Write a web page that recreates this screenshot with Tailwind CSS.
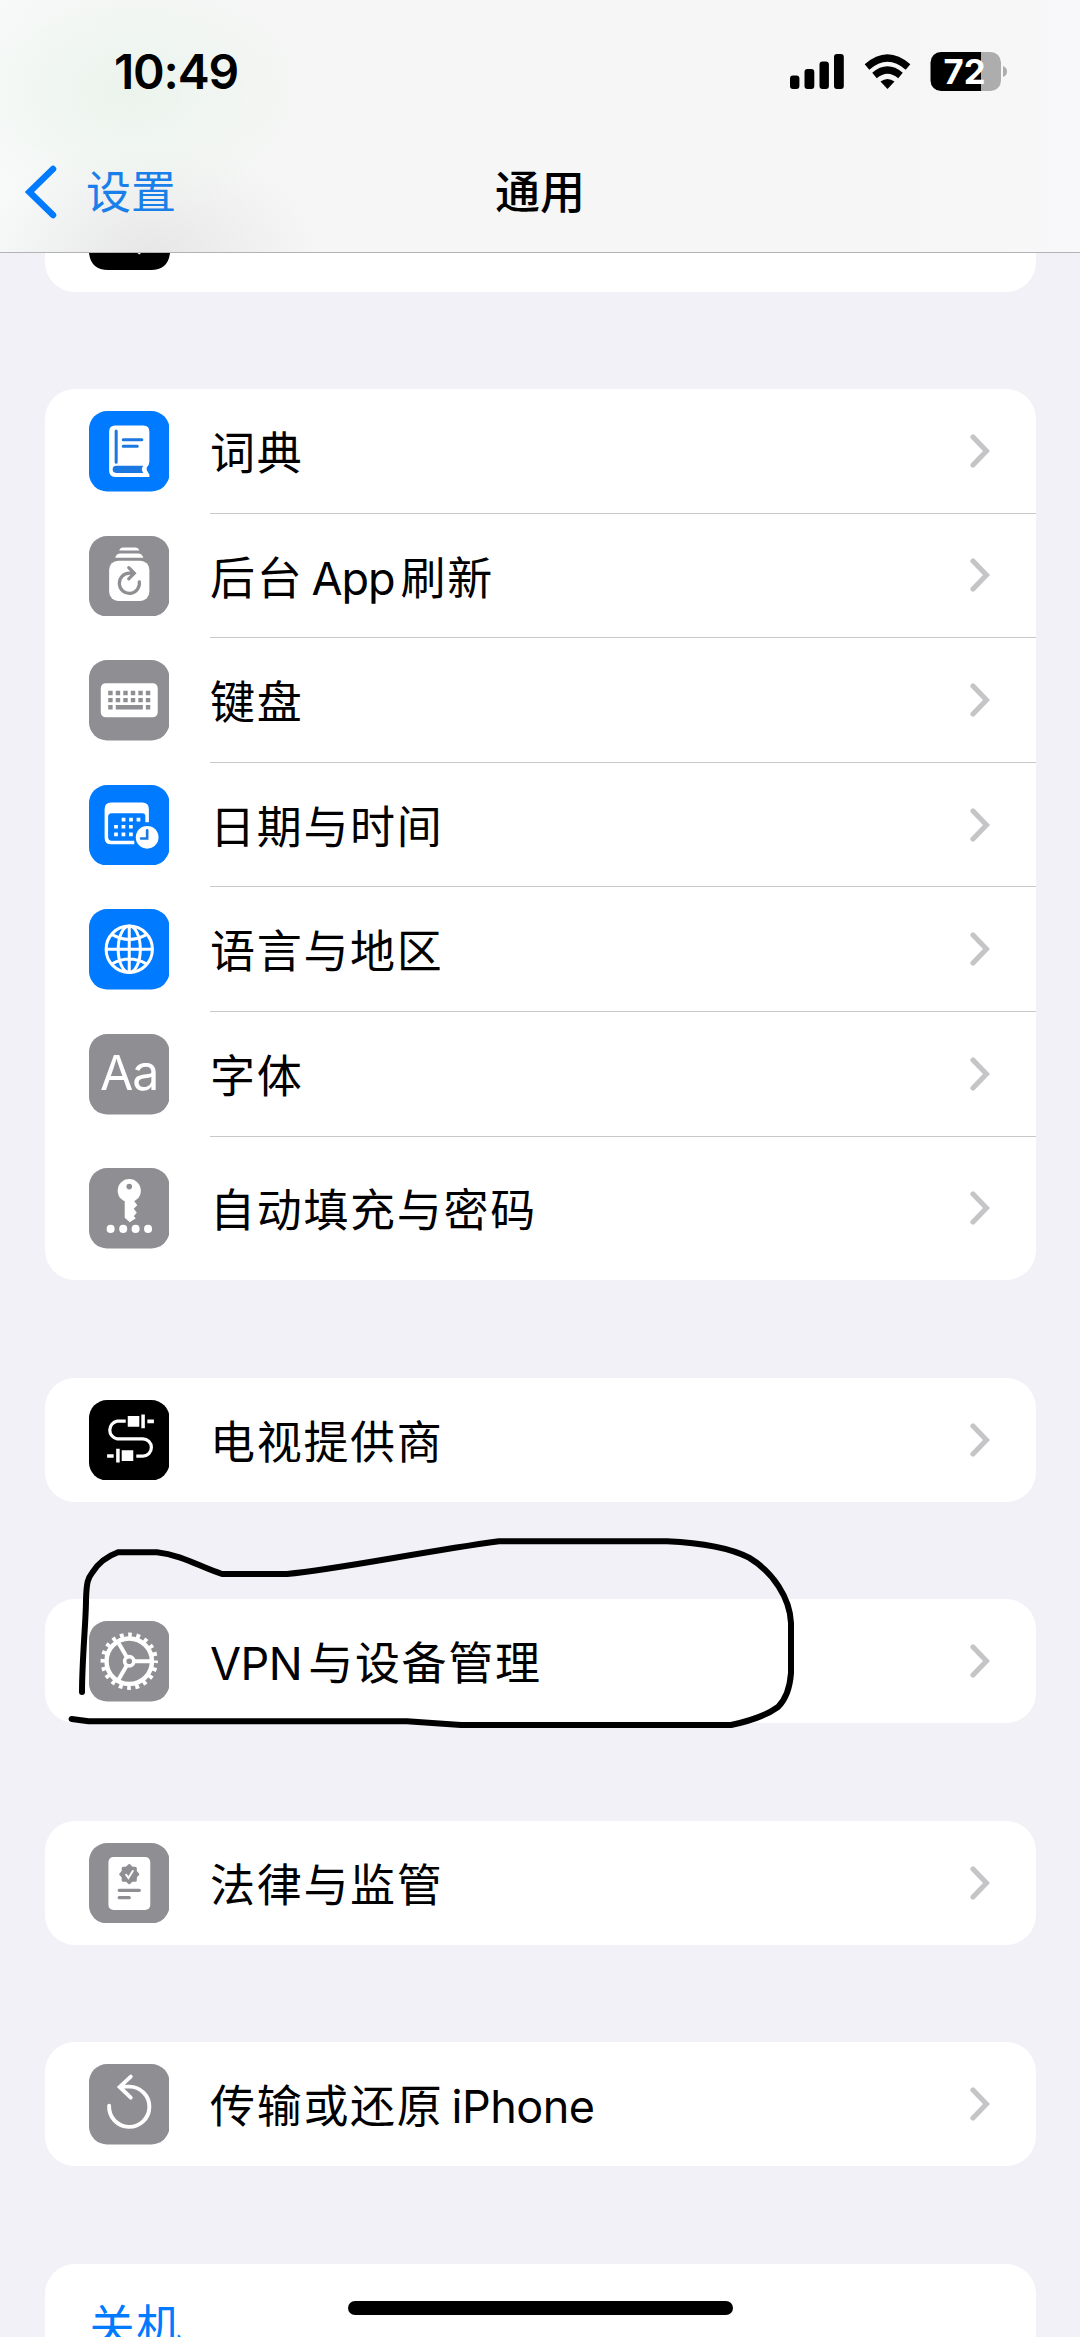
<!DOCTYPE html>
<html lang="zh-CN">
<head>
<meta charset="utf-8">
<title>通用</title>
<script src="https://cdn.jsdelivr.net/npm/@tailwindcss/browser@4"></script>
</head>
<body class="relative flex h-[2337px] w-[1080px] flex-col overflow-hidden bg-[#f2f1f7] font-['Inter','Noto_Sans_CJK_SC',sans-serif] text-black">

<svg class="hidden">
  <symbol id="chev" viewBox="0 0 20 34"><path d="M3 3L16.500 17L3 31" fill="none" stroke="#c5c5c7" stroke-width="5.200" stroke-linecap="round" stroke-linejoin="miter"/></symbol>
</svg>

<header class="relative flex h-[253px] shrink-0 flex-col border-b border-[#b3b3b6] bg-[radial-gradient(ellipse_190px_130px_at_130px_90px,#ebf4ec,transparent),radial-gradient(ellipse_170px_120px_at_150px_260px,#e6e6e6,transparent),linear-gradient(90deg,#f8fafa,#f6f6f6_25%,#f6f6f6_85%,#f8f8fa)]">
  <div class="flex h-[144px] shrink-0 items-center justify-between pl-[114px] pr-[73px]">
    <div class="text-[48px] leading-none font-semibold tracking-[-1.200px]">10:49</div>
    <svg class="h-[60px] w-[220px]" viewBox="0 0 220 60">
      <g>
        <rect x="3" y="33.500" width="9.400" height="13.500" rx="3"/><rect x="17.500" y="27" width="9.800" height="20" rx="3"/><rect x="32.500" y="19.500" width="9.400" height="27.500" rx="3"/><rect x="47" y="12" width="9.800" height="35" rx="3"/>
      </g>
      <g fill="none" stroke="#000" stroke-width="7">
        <path d="M80 25Q100.500 7 121 25"/><path d="M87.500 33.500Q100.500 22.500 113.500 33.500"/>
      </g>
      <path d="M93.500 39.500Q100.500 34.500 107.500 39.500L100.500 47Z"/>
      <path d="M154 10h40v39h-40a10.500 10.500 0 0 1-10.500-10.500v-18A10.500 10.500 0 0 1 154 10z"/>
      <path d="M194 10h9.500a10.500 10.500 0 0 1 10.500 10.500v18a10.500 10.500 0 0 1-10.500 10.500H194z" fill="#adadad"/>
      <path d="M216 24q4 1.500 4 5.500t-4 5.500z" fill="#adadad"/>
      <text x="156.500" y="42" font-size="34" font-weight="700" textLength="42" lengthAdjust="spacingAndGlyphs" fill="#fff">72</text>
    </svg>
  </div>
  <div class="relative flex h-[96px] items-center justify-center text-[45px] leading-none">
    <div class="absolute left-[25px] top-0 flex h-full items-center gap-[29px] text-[#1a7fe8]">
      <svg class="h-[56px] w-[32px]" viewBox="0 0 32 56"><path d="M28 5L4.500 28L28 51" fill="none" stroke="#007aff" stroke-width="6.500" stroke-linecap="round"/></svg>
      <span>设置</span>
    </div>
    <h1 class="font-medium">通用</h1>
  </div>
</header>

<main class="flex flex-col px-[44.500px] text-[45px]">
  <section class="h-[39px] rounded-b-[30px] bg-white pl-[44px]">
    <svg class="h-[17px] w-[81px]" viewBox="0 0 81 17"><path d="M0 0H81Q79 17 62 17H19Q2 17 0 0z"/><path d="M48.500 0h3.500l-1.800 1.500z" fill="#fff"/></svg>
  </section>

  <section class="mt-[97px] flex flex-col rounded-[30px] bg-white">
    <div class="flex h-[124.600px] items-center pl-[44px]">
      <svg class="h-[80.500px] w-[80.500px] shrink-0" viewBox="0 0 80 80">
        <rect width="80" height="80" rx="18" fill="#007aff"/>
        <path d="M26 14.500h28q6 0 6 6v30q0 3-2.500 5.500q-1 3 2.500 7v2.500H26q-6 0-6-6v-39q0-6 6-6z" fill="#fff"/>
        <path d="M27 20v31M34 28.500h18.500M34 35h14" stroke="#1a78e0" stroke-width="3" stroke-linecap="round"/>
        <path d="M27 54.500h27q-3 3.500 0 7H27q-3.500 0-3.500-3.500t3.500-3.500z" fill="#1a78e0"/>
      </svg>
      <div class="ml-[41px] flex h-full flex-1 items-center border-b border-[#c8c8cb] pr-[46px]"><span class="flex-1 pt-[6px] tracking-[1.700px]">词典</span><svg class="h-[34px] w-[20px]"><use href="#chev"/></svg></div>
    </div>
    <div class="flex h-[124.600px] items-center pl-[44px]">
      <svg class="h-[80.500px] w-[80.500px] shrink-0" viewBox="0 0 80 80">
        <rect width="80" height="80" rx="18" fill="#8e8e93"/>
        <path d="M30 14.500q1-3 4-3h12q3 0 4 3zM26 21.500q1.500-4 5-4h18q3.500 0 5 4z" fill="#fff"/>
        <rect x="20" y="24.500" width="40" height="40" rx="9" fill="#fff"/>
        <path d="M50 45.500A10 10 0 1 1 40 37H44.500M39.500 31.500L45 37L39.500 42.500" fill="none" stroke="#8e8e93" stroke-width="3.200" stroke-linecap="round"/>
      </svg>
      <div class="ml-[41px] flex h-full flex-1 items-center border-b border-[#c8c8cb] pr-[46px]"><span class="flex-1 pt-[6px] tracking-[1.700px]">后台<span class="ml-[8px] mr-[6px] tracking-[-1px]">App</span>刷新</span><svg class="h-[34px] w-[20px]"><use href="#chev"/></svg></div>
    </div>
    <div class="flex h-[124.600px] items-center pl-[44px]">
      <svg class="h-[80.500px] w-[80.500px] shrink-0" viewBox="0 0 80 80">
        <rect width="80" height="80" rx="18" fill="#8e8e93"/>
        <rect x="11.700" y="23" width="56.600" height="34" rx="5" fill="#fff"/>
        <path d="M19.100 32.800H61M19.100 39.900H61" stroke="#8e8e93" stroke-width="4.400" stroke-dasharray="4.400 3.080"/>
        <path d="M19.100 47h4.400M26.600 47h26.900M56.500 47H60.900" stroke="#8e8e93" stroke-width="4.400"/>
      </svg>
      <div class="ml-[41px] flex h-full flex-1 items-center border-b border-[#c8c8cb] pr-[46px]"><span class="flex-1 pt-[6px] tracking-[1.700px]">键盘</span><svg class="h-[34px] w-[20px]"><use href="#chev"/></svg></div>
    </div>
    <div class="flex h-[124.600px] items-center pl-[44px]">
      <svg class="h-[80.500px] w-[80.500px] shrink-0" viewBox="0 0 80 80">
        <rect width="80" height="80" rx="18" fill="#007aff"/>
        <path d="M22 17.500h31q6.500 0 6.500 6.500v13h-3.500v-6q0-3-3-3H22.500q-3.500 0-3.500 3.500v20q0 4 3.500 4H45v3.500H22q-6.500 0-6.500-6.500V24q0-6.500 6.500-6.500z" fill="#fff"/>
        <path d="M32.500 34.500h18.500M25 41.500h18.500M25 49h18.500" stroke="#fff" stroke-width="3.700" stroke-dasharray="3.700 3.700"/>
        <circle cx="57.800" cy="52" r="11.300" fill="#fff"/><path d="M57.800 45v8.200h-6" fill="none" stroke="#1a78e0" stroke-width="2.600" stroke-linecap="round"/>
      </svg>
      <div class="ml-[41px] flex h-full flex-1 items-center border-b border-[#c8c8cb] pr-[46px]"><span class="flex-1 pt-[6px] tracking-[1.700px]">日期与时间</span><svg class="h-[34px] w-[20px]"><use href="#chev"/></svg></div>
    </div>
    <div class="flex h-[124.600px] items-center pl-[44px]">
      <svg class="h-[80.500px] w-[80.500px] shrink-0" viewBox="0 0 80 80">
        <rect width="80" height="80" rx="18" fill="#007aff"/>
        <g fill="none" stroke="#fff" stroke-width="3"><circle cx="40" cy="40" r="23"/><ellipse cx="40" cy="40" rx="11" ry="23"/><path d="M40 17v46M17 40h46M23 25.500q17 9.500 34 0M23 54.500q17-9.500 34 0"/></g>
      </svg>
      <div class="ml-[41px] flex h-full flex-1 items-center border-b border-[#c8c8cb] pr-[46px]"><span class="flex-1 pt-[6px] tracking-[1.700px]">语言与地区</span><svg class="h-[34px] w-[20px]"><use href="#chev"/></svg></div>
    </div>
    <div class="flex h-[124.600px] items-center pl-[44px]">
      <svg class="h-[80.500px] w-[80.500px] shrink-0" viewBox="0 0 80 80">
        <rect width="80" height="80" rx="18" fill="#8e8e93"/>
        <text x="11" y="56" font-size="48" textLength="59" fill="#fff">Aa</text>
      </svg>
      <div class="ml-[41px] flex h-full flex-1 items-center border-b border-[#c8c8cb] pr-[46px]"><span class="flex-1 pt-[6px] tracking-[1.700px]">字体</span><svg class="h-[34px] w-[20px]"><use href="#chev"/></svg></div>
    </div>
    <div class="flex h-[143.400px] items-center pl-[44px]">
      <svg class="h-[80.500px] w-[80.500px] shrink-0" viewBox="0 0 80 80">
        <rect width="80" height="80" rx="18" fill="#8e8e93"/>
        <circle cx="40" cy="22.500" r="11.500" fill="#fff"/><circle cx="40" cy="18.500" r="2.800" fill="#8e8e93"/>
        <path d="M35.500 30h9.500v3l3 4l-3.500 3.500l3 4l-3 3.500l2 2l-6 4l-5-4.500z" fill="#fff"/>
        <g fill="#fff"><circle cx="21.500" cy="60.500" r="4"/><circle cx="34" cy="60.500" r="4"/><circle cx="46.300" cy="60.500" r="4"/><circle cx="58.700" cy="60.500" r="4"/></g>
      </svg>
      <div class="ml-[41px] flex h-full flex-1 items-center pr-[46px]"><span class="flex-1 pt-[4px] tracking-[1.700px]">自动填充与密码</span><svg class="h-[34px] w-[20px]"><use href="#chev"/></svg></div>
    </div>
  </section>

  <section class="mt-[98px] flex h-[124px] items-center rounded-[30px] bg-white pl-[44px] pr-[46px]">
    <svg class="h-[80.500px] w-[80.500px] shrink-0" viewBox="0 0 80 80">
      <rect width="80" height="80" rx="18"/>
      <path d="M36.500 21H28a9 9 0 0 0 0 17.700H53.500a8.500 8.500 0 0 1 0 17H47" fill="none" stroke="#fff" stroke-width="3.200"/>
      <path d="M38.500 16h11.500v10.500H38.500zM52 14.500h3.500v13.500H52zM58 19.500h6.500v3.500H58zM32.500 50h11.500v10.500H32.500zM27 48.500h3.500v13.500H27zM18 53.800h6.500v3.500H18z" fill="#fff"/>
    </svg>
    <span class="ml-[41px] flex-1 pt-[5px] tracking-[1.700px]">电视提供商</span><svg class="h-[34px] w-[20px]"><use href="#chev"/></svg>
  </section>

  <section class="mt-[97.500px] flex h-[124px] items-center rounded-[30px] bg-white pl-[44px] pr-[46px]">
    <svg class="h-[80.500px] w-[80.500px] shrink-0" viewBox="0 0 80 80">
      <rect width="80" height="80" rx="18" fill="#8e8e93"/>
      <g fill="none" stroke="#fff"><circle cx="40" cy="40" r="26.200" stroke-width="4.600" stroke-dasharray="3.700 4.530" stroke-dashoffset="1.850"/><circle cx="40" cy="40" r="22.600" stroke-width="4.400"/><circle cx="40" cy="40" r="4.600" stroke-width="3.600"/><path d="M45.500 40H62M37.200 35.300L29 21M37.200 44.700L29 59" stroke-width="4"/></g>
    </svg>
    <span class="ml-[41px] flex-1 pt-[4px] tracking-[1.700px]"><span class="mr-[6px] tracking-[-0.500px]">VPN</span>与设备管理</span><svg class="h-[34px] w-[20px]"><use href="#chev"/></svg>
  </section>

  <section class="mt-[97.500px] flex h-[124px] items-center rounded-[30px] bg-white pl-[44px] pr-[46px]">
    <svg class="h-[80.500px] w-[80.500px] shrink-0" viewBox="0 0 80 80">
      <rect width="80" height="80" rx="18" fill="#8e8e93"/>
      <rect x="19.300" y="14" width="41.600" height="52.500" rx="5" fill="#fff"/>
      <g fill="#8e8e93" stroke="#8e8e93" stroke-width="3" stroke-linejoin="round"><path d="M34 25h12v12H34z"/><path d="M34 25h12v12H34z" transform="rotate(45 40 31)"/></g>
      <path d="M36.800 31.500l2.400 3.300l4.300-7" fill="none" stroke="#fff" stroke-width="2" stroke-linecap="round"/>
      <path d="M30 47H50M30 54.300H40" stroke="#8e8e93" stroke-width="3.200" stroke-linecap="round"/>
    </svg>
    <span class="ml-[41px] flex-1 pt-[5px] tracking-[1.700px]">法律与监管</span><svg class="h-[34px] w-[20px]"><use href="#chev"/></svg>
  </section>

  <section class="mt-[97.500px] flex h-[124px] items-center rounded-[30px] bg-white pl-[44px] pr-[46px]">
    <svg class="h-[80.500px] w-[80.500px] shrink-0" viewBox="0 0 80 80">
      <rect width="80" height="80" rx="18" fill="#8e8e93"/>
      <path d="M20 41.500A20 20 0 1 0 40 22.500H31M41.500 12.500L30.500 22.800L41.500 33.500" fill="none" stroke="#fff" stroke-width="3.900" stroke-linecap="round"/>
    </svg>
    <span class="ml-[41px] flex-1 pt-[4px] tracking-[1.700px]">传输或还原<span class="ml-[8px] tracking-[-0.500px]">iPhone</span></span><svg class="h-[34px] w-[20px]"><use href="#chev"/></svg>
  </section>

  <section class="mt-[97.500px] h-[124px] rounded-[30px] bg-white pl-[45px] pt-[29px] text-[#007aff]">
    <span class="tracking-[1.700px]">关机</span>
  </section>
</main>

<svg class="pointer-events-none absolute left-0 top-[1520px] h-[230px] w-[1080px]" viewBox="0 1520 1080 230">
  <path d="M82 1692C82 1660 86 1620 86 1600C86.500 1582 88 1578 92 1573C98 1563 108 1556 118 1552.300H157C182 1555 200 1567 222 1574H287C340 1569 420 1552 499 1541.300H667C705 1543 732 1549 749 1557.700C773 1572 790 1598 791 1623V1673C790 1687 786 1699 778 1707C767 1715 750 1721 731 1725H461L407 1721.300H88.500L71.600 1719" fill="none" stroke="#000" stroke-width="6" stroke-linecap="round" stroke-linejoin="round"/>
</svg>
<div class="absolute left-[348px] top-[2301px] h-[14px] w-[385px] rounded-full bg-black"></div>
</body>
</html>
